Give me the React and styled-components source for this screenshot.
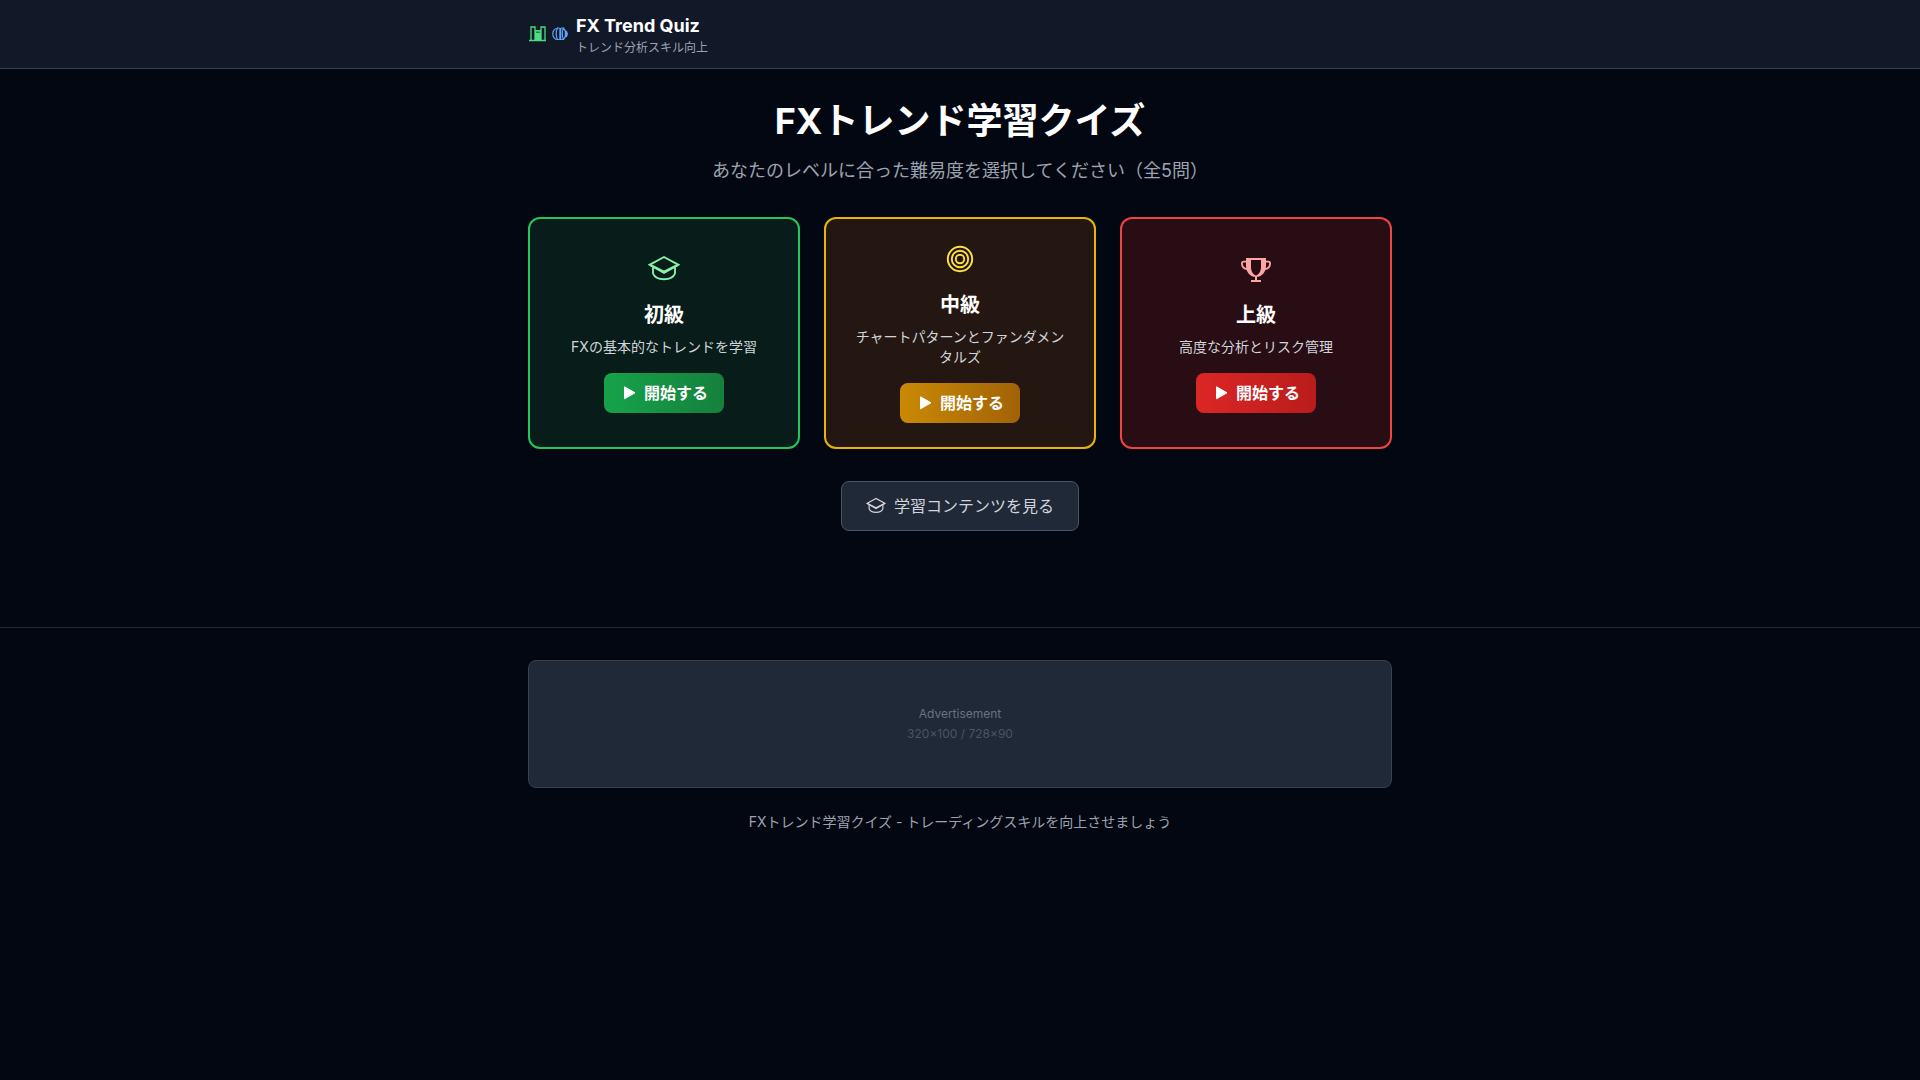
import styled, { createGlobalStyle } from "styled-components";

const GlobalStyle = createGlobalStyle`
  * {
    box-sizing: border-box;
    margin: 0;
    padding: 0;
  }
  body {
    background-color: #030712;
    color: #fff;
    font-family: Inter, "Noto Sans CJK JP", sans-serif;
    font-size: 16px;
    line-height: 24px;
  }
  button {
    font-family: inherit;
    cursor: pointer;
  }
`;

const Container = styled.div`
  width: 100%;
  max-width: 896px;
  margin: 0 auto;
  padding: 0 16px;
`;

const Header = styled.header`
  padding: 12px 0;
  background-color: #111827;
  border-bottom: 1px solid #374151;
`;
const Brand = styled.div`
  display: flex;
  align-items: center;
  gap: 8px;
`;
const BrandIcons = styled.div`
  display: flex;
  align-items: center;
  gap: 4px;
`;
const BrandName = styled.h1`
  font-size: 18px;
  line-height: 28px;
  font-weight: 700;
`;
const BrandSub = styled.p`
  font-size: 12px;
  line-height: 16px;
  color: #9ca3af;
`;

const Icon = styled.svg`
  display: block;
  flex-shrink: 0;
  width: ${(props) => props.$size}px;
  height: ${(props) => props.$size}px;
  color: ${(props) => props.$color || "currentColor"};
  fill: none;
  stroke: currentColor;
`;

const Main = styled.main`
  padding: 32px 0 96px;
`;
const Title = styled.h2`
  margin-bottom: 16px;
  font-size: 36px;
  line-height: 40px;
  font-weight: 700;
  text-align: center;
`;
const Lead = styled.p`
  margin-bottom: 32px;
  font-size: 18px;
  line-height: 28px;
  color: #9ca3af;
  text-align: center;
`;

const Levels = styled.div`
  display: grid;
  grid-template-columns: repeat(3, 1fr);
  gap: 24px;
  margin-bottom: 32px;
  @media (max-width: 767px) {
    grid-template-columns: 1fr;
  }
`;
const Card = styled.section`
  display: flex;
  flex-direction: column;
  align-items: center;
  justify-content: center;
  padding: 24px;
  border: 2px solid ${(props) => props.$border};
  border-radius: 12px;
  background-color: ${(props) => props.$bg};
  text-align: center;
`;
const CardTitle = styled.h3`
  margin: 16px 0 8px;
  font-size: 20px;
  line-height: 28px;
  font-weight: 700;
`;
const CardText = styled.p`
  margin-bottom: 16px;
  font-size: 14px;
  line-height: 20px;
  color: #d1d5db;
`;
const StartButton = styled.button`
  display: flex;
  align-items: center;
  gap: 8px;
  padding: 8px 16px;
  border: none;
  border-radius: 8px;
  background: linear-gradient(
    to right,
    ${(props) => props.$from},
    ${(props) => props.$to}
  );
  color: #fff;
  font-size: 16px;
  line-height: 24px;
  font-weight: 600;
`;

const LearnButton = styled.button`
  display: flex;
  align-items: center;
  gap: 8px;
  margin: 0 auto;
  padding: 12px 24px;
  border: 1px solid #4b5563;
  border-radius: 8px;
  background-color: #1f2937;
  color: #d1d5db;
  font-size: 16px;
  line-height: 24px;
`;

const Footer = styled.footer`
  padding: 32px 0;
  border-top: 1px solid #1f2937;
`;
const Ad = styled.div`
  display: flex;
  flex-direction: column;
  align-items: center;
  justify-content: center;
  gap: 4px;
  min-height: 128px;
  margin-bottom: 24px;
  border: 1px solid #374151;
  border-radius: 8px;
  background-color: #1f2937;
  font-size: 12px;
  line-height: 16px;
`;
const AdLabel = styled.p`
  color: #6b7280;
`;
const AdSize = styled.p`
  color: #4b5563;
`;
const FooterText = styled.p`
  font-size: 14px;
  line-height: 20px;
  color: #9ca3af;
  text-align: center;
`;

const ChartIcon = () => (
  <Icon $size={20} $color="#4ade80" viewBox="0 0 20 20" aria-hidden="true">
    <path d="M1 16.5h17M3 16.5V3h4v13.500M13 16.500V3h4v13.500" strokeWidth="1.300" />
    <path
      d="M7 6h6v10.500H7zM8.500 7.500v1.500h1V7.500zM10.500 7.500v1.500h1V7.500z"
      fill="currentColor"
      fillRule="evenodd"
      stroke="none"
    />
  </Icon>
);

const BrainIcon = () => (
  <Icon $size={16} $color="#60a5fa" viewBox="0 0 16 16" aria-hidden="true">
    <path d="M5 2.500C2.500 2.500.8 5 .8 7.800S2.500 13.500 5 13.500" strokeWidth="1.200" />
    <path d="M7.500 2H5.500C4.500 4 4.200 6 4.200 7.800s.3 4 1.300 5.700h2" strokeWidth="1.200" />
    <path d="M9 2h2.500c-1 1.800-1.200 3.800-1.200 5.800s.2 4 1.200 5.700H9M11.500 2.500l2.500 3M11.500 13l2.500-3" strokeWidth="1.200" />
    <path d="M7.300 2h2v12h-2zM12.700 5h2.300l1 3-1 3h-2.300z" fill="currentColor" stroke="none" />
  </Icon>
);

const CapIcon = ({ size, color }) => (
  <Icon $size={size} $color={color} viewBox="0 0 32 32" aria-hidden="true">
    <path d="M16 4L1.500 11.800 16 20l14.500-8.200z" strokeWidth="1.900" />
    <path d="M2.500 12L16 18.800 29.500 12" strokeWidth="2.200" />
    <path d="M5 14v6.500C6.500 24.300 11 26.200 16 26.200s9.500-1.900 11-5.700V14" strokeWidth="1.900" />
  </Icon>
);

const TargetIcon = ({ size, color }) => (
  <Icon $size={size} $color={color} viewBox="0 0 32 32" aria-hidden="true">
    <g strokeWidth="1.900">
      <circle cx="16" cy="16" r="12.200" />
      <circle cx="16" cy="16" r="8.200" />
      <circle cx="16" cy="16" r="4.200" />
    </g>
  </Icon>
);

const TrophyIcon = ({ size, color }) => (
  <Icon $size={size} $color={color} viewBox="0 0 32 32" aria-hidden="true">
    <path
      d="M6 5h20v8c0 6-4 11-10 11S6 19 6 13zM11 7v7c0 4 2 7.500 5 8.500 3-1 5-4.500 5-8.500V7z"
      fill="currentColor"
      fillRule="evenodd"
      stroke="none"
    />
    <path
      d="M7 8.700H3.500c-1 0-1.600.6-1.600 1.600C1.900 14 4 16 7.500 16M25 8.700h3.500c1 0 1.600.6 1.600 1.600C30.100 14 28 16 24.500 16"
      strokeWidth="1.800"
    />
    <path d="M16 23v5M11 28h10" strokeWidth="2" />
  </Icon>
);

const PlayIcon = () => (
  <Icon $size={16} viewBox="0 0 16 16" aria-hidden="true">
    <path d="M4.500 1.800v12L15 7.800z" fill="currentColor" strokeWidth="1" strokeLinejoin="round" />
  </Icon>
);

const levels = [
  {
    title: "初級",
    text: "FXの基本的なトレンドを学習",
    icon: CapIcon,
    color: "#86efac",
    border: "#22c55e",
    bg: "rgba(20, 83, 45, 0.3)",
    from: "#16a34a",
    to: "#15803d",
  },
  {
    title: "中級",
    text: "チャートパターンとファンダメンタルズ",
    icon: TargetIcon,
    color: "#fde047",
    border: "#eab308",
    bg: "rgba(113, 63, 18, 0.3)",
    from: "#ca8a04",
    to: "#a16207",
  },
  {
    title: "上級",
    text: "高度な分析とリスク管理",
    icon: TrophyIcon,
    color: "#fca5a5",
    border: "#ef4444",
    bg: "rgba(127, 29, 29, 0.3)",
    from: "#dc2626",
    to: "#b91c1c",
  },
];

export default function App() {
  return (
    <>
      <GlobalStyle />
      <Header>
        <Container>
          <Brand>
            <BrandIcons>
              <ChartIcon />
              <BrainIcon />
            </BrandIcons>
            <div>
              <BrandName>FX Trend Quiz</BrandName>
              <BrandSub>トレンド分析スキル向上</BrandSub>
            </div>
          </Brand>
        </Container>
      </Header>
      <Main>
        <Container>
          <Title>FXトレンド学習クイズ</Title>
          <Lead>あなたのレベルに合った難易度を選択してください（全5問）</Lead>
          <Levels>
            {levels.map((level) => (
              <Card key={level.title} $border={level.border} $bg={level.bg}>
                <level.icon size={32} color={level.color} />
                <CardTitle>{level.title}</CardTitle>
                <CardText>{level.text}</CardText>
                <StartButton type="button" $from={level.from} $to={level.to}>
                  <PlayIcon />
                  開始する
                </StartButton>
              </Card>
            ))}
          </Levels>
          <LearnButton type="button">
            <CapIcon size={20} />
            学習コンテンツを見る
          </LearnButton>
        </Container>
      </Main>
      <Footer>
        <Container>
          <Ad>
            <AdLabel>Advertisement</AdLabel>
            <AdSize>320×100 / 728×90</AdSize>
          </Ad>
          <FooterText>
            FXトレンド学習クイズ - トレーディングスキルを向上させましょう
          </FooterText>
        </Container>
      </Footer>
    </>
  );
}
